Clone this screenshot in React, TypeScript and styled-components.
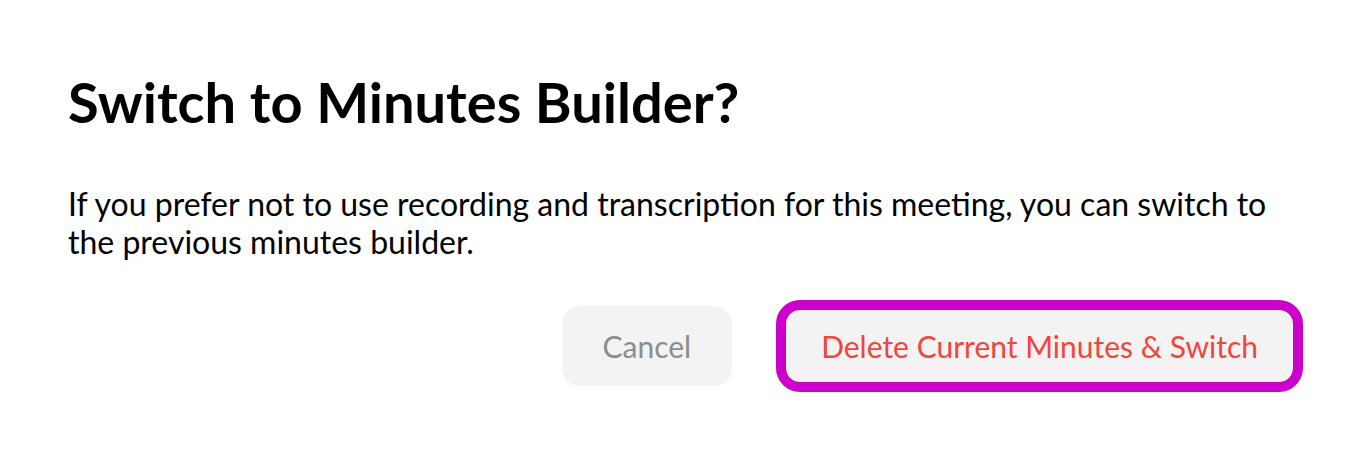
import React from "react";
import styled, { createGlobalStyle } from "styled-components";

const Global = createGlobalStyle`
  html, body { margin: 0; padding: 0; background: #ffffff; }
  body { font-family: Lato, "Noto Sans", sans-serif; -webkit-font-smoothing: antialiased; }
`;

const Dialog = styled.div`
  width: 1370px;
  height: 452px;
  box-sizing: border-box;
  padding: 68px 73px 0 68px;
  display: flex;
  flex-direction: column;
  background: #ffffff;
`;

const Title = styled.h1`
  margin: 0;
  font-family: Lato, sans-serif;
  font-weight: 700;
  font-size: 56px;
  line-height: 67px;
  color: #000000;
`;

const Body = styled.p`
  margin: 50px 0 0;
  font-family: Lato, sans-serif;
  font-weight: 400;
  font-size: 32px;
  line-height: 38px;
  color: #000000;
  max-width: 1229px;
`;

const Actions = styled.div`
  margin-top: 45px;
  display: flex;
  justify-content: flex-end;
  gap: 50px;
`;

const Button = styled.button<{ $tone: "muted" | "danger"; $focused?: boolean }>`
  height: 80px;
  padding: 0 ${(p) => (p.$tone === "danger" ? "39px" : "41px")};
  border: none;
  border-radius: 18px;
  background: #f3f3f3;
  font-family: Lato, sans-serif;
  font-size: 30px;
  font-weight: 400;
  color: ${(p) => (p.$tone === "danger" ? "#f2453b" : "#8c8c8c")};
  cursor: pointer;
  outline: ${(p) => (p.$focused ? "10px solid #cc00cc" : "none")};
  outline-offset: -4px;
`;

export default function App() {
  return (
    <>
      <Global />
      <Dialog>
        <Title>Switch to Minutes Builder?</Title>
        <Body>
          If you prefer not to use recording and transcription for this meeting, you can switch to the
          previous minutes builder.
        </Body>
        <Actions>
          <Button $tone="muted">Cancel</Button>
          <Button $tone="danger" $focused>
            Delete Current Minutes &amp; Switch
          </Button>
        </Actions>
      </Dialog>
    </>
  );
}
